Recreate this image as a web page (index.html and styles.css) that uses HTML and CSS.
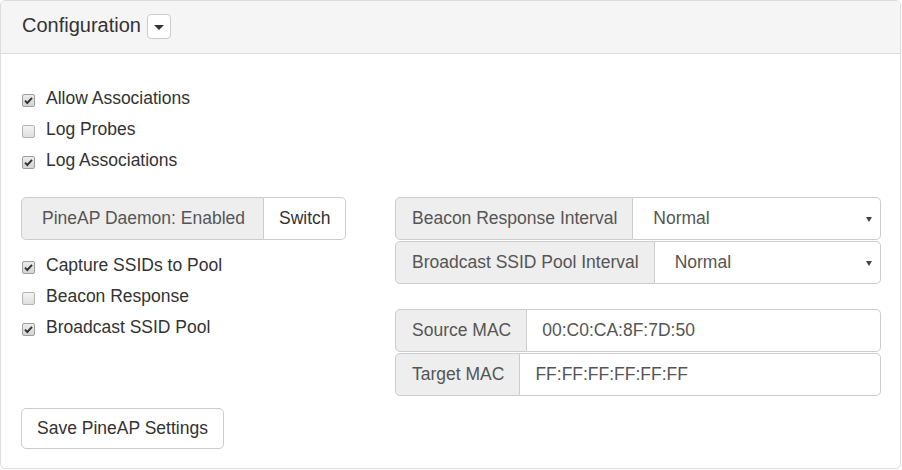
FILE: index.html
```html
<!DOCTYPE html>
<html>
<head>
<meta charset="utf-8">
<link rel="stylesheet" href="styles.css">
</head>
<body>
<div class="panel">
  <div class="panel-heading">
    <span class="title">Configuration</span>
    <span class="caret-btn"><span class="caret"></span></span>
  </div>
  <div class="panel-body">
    <div class="checks top">
      <div class="check"><span class="cb-wrap"><span class="cb on"><svg viewBox="0 0 13 13" width="13" height="13"><path d="M3 6.6 L5.3 9 L10 3.8" fill="none" stroke="#333" stroke-width="1.9"/></svg></span></span>Allow Associations</div>
      <div class="check"><span class="cb-wrap"><span class="cb"></span></span>Log Probes</div>
      <div class="check"><span class="cb-wrap"><span class="cb on"><svg viewBox="0 0 13 13" width="13" height="13"><path d="M3 6.6 L5.3 9 L10 3.8" fill="none" stroke="#333" stroke-width="1.9"/></svg></span></span>Log Associations</div>
    </div>
    <div class="row">
      <div class="col-left">
        <div class="igroup inline">
          <span class="addon daemon">PineAP Daemon: Enabled</span>
          <span class="btn-right">Switch</span>
        </div>
        <div class="checks sub">
          <div class="check"><span class="cb-wrap"><span class="cb on"><svg viewBox="0 0 13 13" width="13" height="13"><path d="M3 6.6 L5.3 9 L10 3.8" fill="none" stroke="#333" stroke-width="1.9"/></svg></span></span>Capture SSIDs to Pool</div>
          <div class="check"><span class="cb-wrap"><span class="cb"></span></span>Beacon Response</div>
          <div class="check"><span class="cb-wrap"><span class="cb on"><svg viewBox="0 0 13 13" width="13" height="13"><path d="M3 6.6 L5.3 9 L10 3.8" fill="none" stroke="#333" stroke-width="1.9"/></svg></span></span>Broadcast SSID Pool</div>
        </div>
      </div>
      <div class="col-right">
        <div class="igroup">
          <span class="addon">Beacon Response Interval</span>
          <div class="select"><span>Normal</span><span class="arrow"></span></div>
        </div>
        <div class="igroup next">
          <span class="addon">Broadcast SSID Pool Interval</span>
          <div class="select"><span>Normal</span><span class="arrow"></span></div>
        </div>
        <div class="igroup mac">
          <span class="addon">Source MAC</span>
          <div class="input">00:C0:CA:8F:7D:50</div>
        </div>
        <div class="igroup next">
          <span class="addon">Target MAC</span>
          <div class="input">FF:FF:FF:FF:FF:FF</div>
        </div>
      </div>
    </div>
    <div class="save-row"><span class="save">Save PineAP Settings</span></div>
  </div>
</div>
</body>
</html>
```
FILE: styles.css
```css
* { box-sizing: border-box; }
html, body { margin: 0; padding: 0; background: #fff; }
body {
  font-family: "Liberation Sans", Arial, sans-serif;
  color: #333;
  font-size: 17.5px;
}
.panel {
  width: 901px;
  height: 469px;
  border: 1px solid #ddd;
  border-radius: 5px;
  overflow: hidden;
}
.panel-heading {
  height: 53px;
  background: #f5f5f5;
  border-bottom: 1px solid #ddd;
  display: flex;
  align-items: flex-start;
  padding: 13px 20px 0 21px;
  gap: 6px;
}
.title {
  font-size: 20px;
  line-height: 22px;
  color: #333;
}
.caret-btn {
  width: 24px;
  height: 25px;
  background: #fff;
  border: 1px solid #ccc;
  border-radius: 4px;
  display: flex;
  align-items: center;
  justify-content: center;
}
.caret {
  width: 0;
  height: 0;
  border-top: 5px solid #333;
  border-left: 5px solid transparent;
  border-right: 5px solid transparent;
  margin-top: 1px;
}
.panel-body {
  padding: 19px 19px 0 20px;
}
.checks {
  display: flex;
  flex-direction: column;
  gap: 6px;
}
.checks.top { margin-top: 13px; }
.checks.sub { margin-top: 13px; }
.check {
  height: 25px;
  line-height: 25px;
  display: flex;
  color: #333;
}
.cb-wrap {
  width: 25px;
  flex: none;
}
.cb {
  display: block;
  width: 13px;
  height: 13px;
  margin: 8px 0 0 1px;
  border: 1px solid #b4b4b4;
  border-radius: 2px;
  background: linear-gradient(#f4f4f4, #dedede);
}
.cb.on {
  border-color: #9e9e9e;
  background: linear-gradient(#ececec, #d4d4d4);
}
.cb svg { display: block; margin: -1px 0 0 -1px; }
.row {
  display: flex;
  margin-top: 24px;
}
.col-left { width: 374px; flex: none; }
.col-right { flex: 1; }
.igroup {
  display: flex;
  height: 43px;
}
.igroup.inline { display: inline-flex; }
.igroup.next { margin-top: 1px; }
.igroup.mac { margin-top: 25px; }
.addon {
  display: flex;
  align-items: center;
  padding: 0 15px 0 16px;
  background: #eee;
  border: 1px solid #ccc;
  border-radius: 5px 0 0 5px;
  color: #555;
  white-space: nowrap;
  flex: none;
}
.addon.daemon { padding: 0 18px 0 20px; }
.btn-right {
  display: flex;
  align-items: center;
  padding: 0 14px 0 15px;
  background: #fff;
  border: 1px solid #ccc;
  border-left: none;
  border-radius: 0 5px 5px 0;
  color: #333;
}
.select, .input {
  flex: 1;
  display: flex;
  align-items: center;
  border: 1px solid #ccc;
  border-left: none;
  border-radius: 0 5px 5px 0;
  background: #fff;
  color: #555;
  white-space: nowrap;
}
.select {
  justify-content: space-between;
  padding: 0 8px 0 20px;
}
.input { padding-left: 15px; }
.arrow {
  width: 0;
  height: 0;
  border-top: 5px solid #444;
  border-left: 3px solid transparent;
  border-right: 3px solid transparent;
  margin-top: 1px;
}
.save-row {
  margin-top: 12px;
  display: flex;
}
.save {
  display: flex;
  align-items: center;
  height: 41px;
  padding: 0 15px;
  border: 1px solid #ccc;
  border-radius: 5px;
  background: #fff;
  color: #333;
}
```
